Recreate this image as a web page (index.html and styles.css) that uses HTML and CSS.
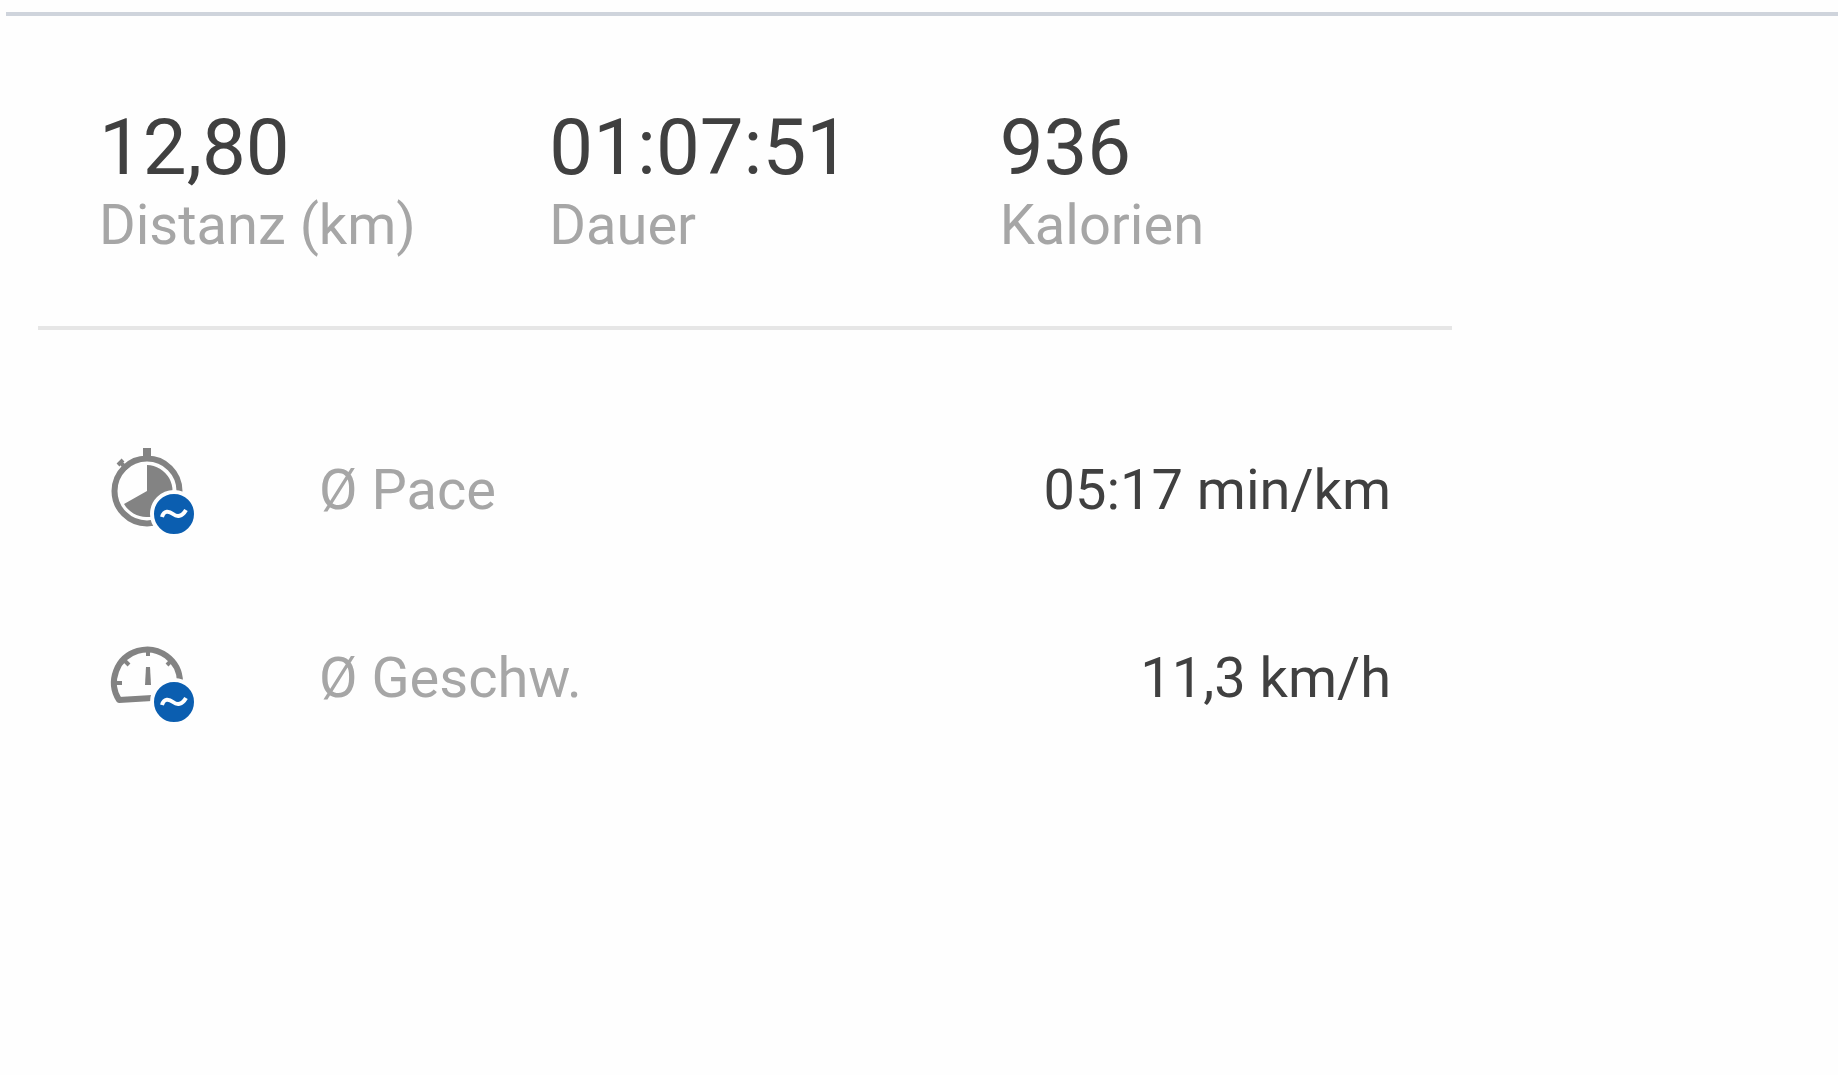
FILE: index.html
```html
<!DOCTYPE html>
<html lang="de">
<head>
    <meta charset="UTF-8">
    <meta name="viewport" content="width=device-width, initial-scale=1.0">
    <title>Training</title>
    <link rel="stylesheet" href="styles.css">
</head>
<body>
    <main class="workout">
        <dl class="summary">
            <div class="stat">
                <dt>Distanz (km)</dt>
                <dd>12,80</dd>
            </div>
            <div class="stat">
                <dt>Dauer</dt>
                <dd>01:07:51</dd>
            </div>
            <div class="stat">
                <dt>Kalorien</dt>
                <dd>936</dd>
            </div>
        </dl>

        <ul class="details">
            <li class="detail">
                <svg class="icon" viewBox="0 0 96 96" aria-hidden="true">
                    <!-- stopwatch -->
                    <circle class="line" cx="48" cy="49" r="32.500"/>
                    <path class="fill" d="M48 49V23A26 26 0 1 1 25 62Z"/>
                    <path class="fill" d="M44 6h8v9h-8z"/>
                    <path class="tick" d="M19 23l5-5M22 21l6 6"/>
                    <!-- average badge -->
                    <circle class="badge" cx="75" cy="72" r="22"/>
                    <path class="wave" d="M63 75C65 68 70 69 74 72S83 75 87 68"/>
                </svg>
                <span class="label">Ø Pace</span>
                <span class="value">05:17 min/km</span>
            </li>
            <li class="detail">
                <svg class="icon" viewBox="0 0 96 96" aria-hidden="true">
                    <!-- speedometer -->
                    <path class="line" d="M53 68L20 70A33 33 0 1 1 81 52"/>
                    <path class="tick" d="M49 18v8M16 53h7M26 31l4 4M72 31l-4 4"/>
                    <path class="fill" d="M47 37h4l1 18h-6z"/>
                    <!-- average badge -->
                    <circle class="badge" cx="75" cy="72" r="22"/>
                    <path class="wave" d="M63 75C65 68 70 69 74 72S83 75 87 68"/>
                </svg>
                <span class="label">Ø Geschw.</span>
                <span class="value">11,3 km/h</span>
            </li>
        </ul>
    </main>
</body>
</html>
```
FILE: styles.css
```css
:root {
    --text-color: #404040;
    --label-color: #a6a6a6;
    --icon-color: #838383;
    --badge-color: #0b5eb0;
    --top-line-color: #cfd4dc;
    --divider-color: #e6e6e6;
}
body {
    font-family: Roboto, "Liberation Sans", sans-serif;
    font-size: 56px;
    line-height: 74px;
    color: var(--text-color);
    background-color: #fefefe;
    margin: 0;
}
.workout {
    border-top: 4px solid var(--top-line-color);
    margin: 12px 0 0 6px;
    padding: 92px 21% 0 32px;
}
.summary {
    display: grid;
    grid-template-columns: repeat(3, 1fr);
    margin: 0;
    padding: 0 2px 64px 61px;
    border-bottom: 4px solid var(--divider-color);
}
.stat {
    display: flex;
    flex-direction: column-reverse;
    white-space: nowrap;
}
.stat dt {
    color: var(--label-color);
}
.stat dd {
    font-size: 78px;
    line-height: 80px;
    margin: 0;
}
.details {
    list-style: none;
    margin: 0;
    padding: 66px 61px 0 61px;
}
.detail {
    display: flex;
    align-items: center;
    height: 188px;
}
.label {
    color: var(--label-color);
    margin-left: 124px;
}
.value {
    margin-left: auto;
}
.icon {
    flex: none;
    width: 96px;
    height: 96px;
}
.fill {
    fill: var(--icon-color);
}
.line {
    fill: none;
    stroke: var(--icon-color);
    stroke-width: 6;
    stroke-linejoin: round;
}
.tick {
    fill: none;
    stroke: var(--icon-color);
    stroke-width: 4;
}
.badge {
    fill: var(--badge-color);
    stroke: #fefefe;
    stroke-width: 4;
}
.wave {
    fill: none;
    stroke: #fefefe;
    stroke-width: 4;
}
```
